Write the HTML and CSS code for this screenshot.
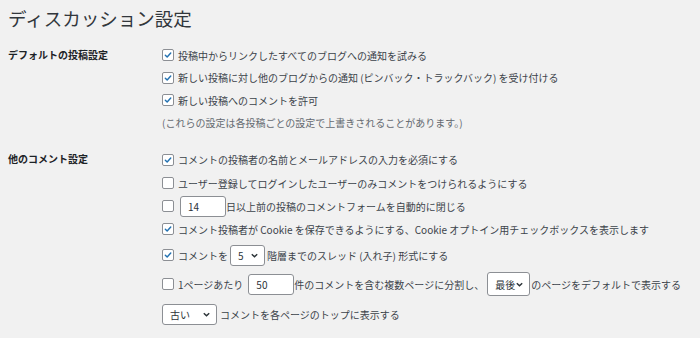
FILE: index.html
```html
<!DOCTYPE html>
<html lang="ja">
<head>
<meta charset="utf-8">
<title>ディスカッション設定</title>
<link rel="stylesheet" href="styles.css">
</head>
<body>
<div class="wrap">
  <h1 class="title">ディスカッション設定</h1>

  <div class="section sec1">
    <div class="label">デフォルトの投稿設定</div>
    <div class="opts">
      <div class="row"><span class="cb on"><svg viewBox="0 0 12 12"><path d="M2.8 6.2 L5 8.4 L9.3 3.6"/></svg></span><span>投稿中からリンクしたすべてのブログへの通知を試みる</span></div>
      <div class="row"><span class="cb on"><svg viewBox="0 0 12 12"><path d="M2.8 6.2 L5 8.4 L9.3 3.6"/></svg></span><span>新しい投稿に対し他のブログからの通知 (ピンバック・トラックバック) を受け付ける</span></div>
      <div class="row"><span class="cb on"><svg viewBox="0 0 12 12"><path d="M2.8 6.2 L5 8.4 L9.3 3.6"/></svg></span><span>新しい投稿へのコメントを許可</span></div>
      <div class="row note">(これらの設定は各投稿ごとの設定で上書きされることがあります。)</div>
    </div>
  </div>

  <div class="section sec2">
    <div class="label">他のコメント設定</div>
    <div class="opts">
      <div class="row r1"><span class="cb on"><svg viewBox="0 0 12 12"><path d="M2.8 6.2 L5 8.4 L9.3 3.6"/></svg></span><span>コメントの投稿者の名前とメールアドレスの入力を必須にする</span></div>
      <div class="row r2"><span class="cb"></span><span>ユーザー登録してログインしたユーザーのみコメントをつけられるようにする</span></div>
      <div class="row r3"><span class="cb"></span><span class="field w46 ml6">14</span><span>日以上前の投稿のコメントフォームを自動的に閉じる</span></div>
      <div class="row r4"><span class="cb on"><svg viewBox="0 0 12 12"><path d="M2.8 6.2 L5 8.4 L9.3 3.6"/></svg></span><span>コメント投稿者が Cookie を保存できるようにする、Cookie オプトイン用チェックボックスを表示します</span></div>
      <div class="row r5"><span class="cb on"><svg viewBox="0 0 12 12"><path d="M2.8 6.2 L5 8.4 L9.3 3.6"/></svg></span><span>コメントを</span><span class="select s5">5<svg viewBox="0 0 10 10"><path d="M2 3.5 L5 6.5 L8 3.5"/></svg></span><span>階層までのスレッド (入れ子) 形式にする</span></div>
      <div class="row r6"><span class="cb"></span><span>1ページあたり</span><span class="field w46 ml4">50</span><span>件のコメントを含む複数ページに分割し、</span><span class="select slast">最後<svg viewBox="0 0 10 10"><path d="M2 3.5 L5 6.5 L8 3.5"/></svg></span><span>のページをデフォルトで表示する</span></div>
      <div class="row r7"><span class="select sold">古い<svg viewBox="0 0 10 10"><path d="M2 3.5 L5 6.5 L8 3.5"/></svg></span><span class="ml3">コメントを各ページのトップに表示する</span></div>
    </div>
  </div>
</div>
</body>
</html>
```

FILE: styles.css
```css
html, body {
  margin: 0;
  padding: 0;
  background: #f1f1f1;
}
body {
  font-family: "Noto Sans CJK JP", "Noto Sans", sans-serif;
  color: #3c434a;
  font-size: 10px;
}
.wrap {
  padding: 7px 0 0 8px;
}
.title {
  margin: 0;
  font-size: 18.5px;
  font-weight: 400;
  line-height: 22px;
  height: 22px;
  color: #32373c;
}
.section {
  display: grid;
  grid-template-columns: 154px 1fr;
}
.sec1 { margin-top: 15px; }
.sec2 { margin-top: 14px; }
.label {
  font-weight: 700;
  color: #1d2327;
  line-height: 22px;
}
.row {
  display: flex;
  align-items: center;
  height: 22.5px;
  white-space: nowrap;
}
.note { color: #646970; }
.sec2 .r1 { height: 23px; }
.sec2 .r2 { height: 24px; }
.sec2 .r3 { height: 22px; }
.sec2 .r4 { height: 24px; }
.sec2 .r5 { height: 28px; }
.sec2 .r6 { height: 30px; }
.sec2 .r7 { height: 30px; }

.cb {
  box-sizing: border-box;
  width: 12px;
  height: 12px;
  border: 1px solid #8c8f94;
  border-radius: 2px;
  background: #fff;
  margin-right: 4px;
  flex: none;
  display: flex;
}
.cb svg {
  width: 10px;
  height: 10px;
  fill: none;
  stroke: #2271b1;
  stroke-width: 1.7;
  stroke-linecap: round;
  stroke-linejoin: round;
}
.field, .select {
  box-sizing: border-box;
  height: 21px;
  border: 1px solid #8c8f94;
  border-radius: 3px;
  background: #fff;
  display: flex;
  align-items: center;
  flex: none;
  padding-left: 7px;
  color: #2c3338;
}
.w46 { width: 46px; }
.ml6 { margin-left: 2px; }
.ml4 { margin-left: 5px; }
.ml3 { margin-left: 3px; }
.select {
  justify-content: space-between;
  padding-right: 5px;
}
.select svg {
  width: 9px;
  height: 9px;
  fill: none;
  stroke: #2c3338;
  stroke-width: 1.6;
}
.s5 { width: 35px; margin: 0 2px; }
.slast { width: 43px; height: 24px; margin: 0 1px 0 3px; }
.sold { width: 55px; }
```
